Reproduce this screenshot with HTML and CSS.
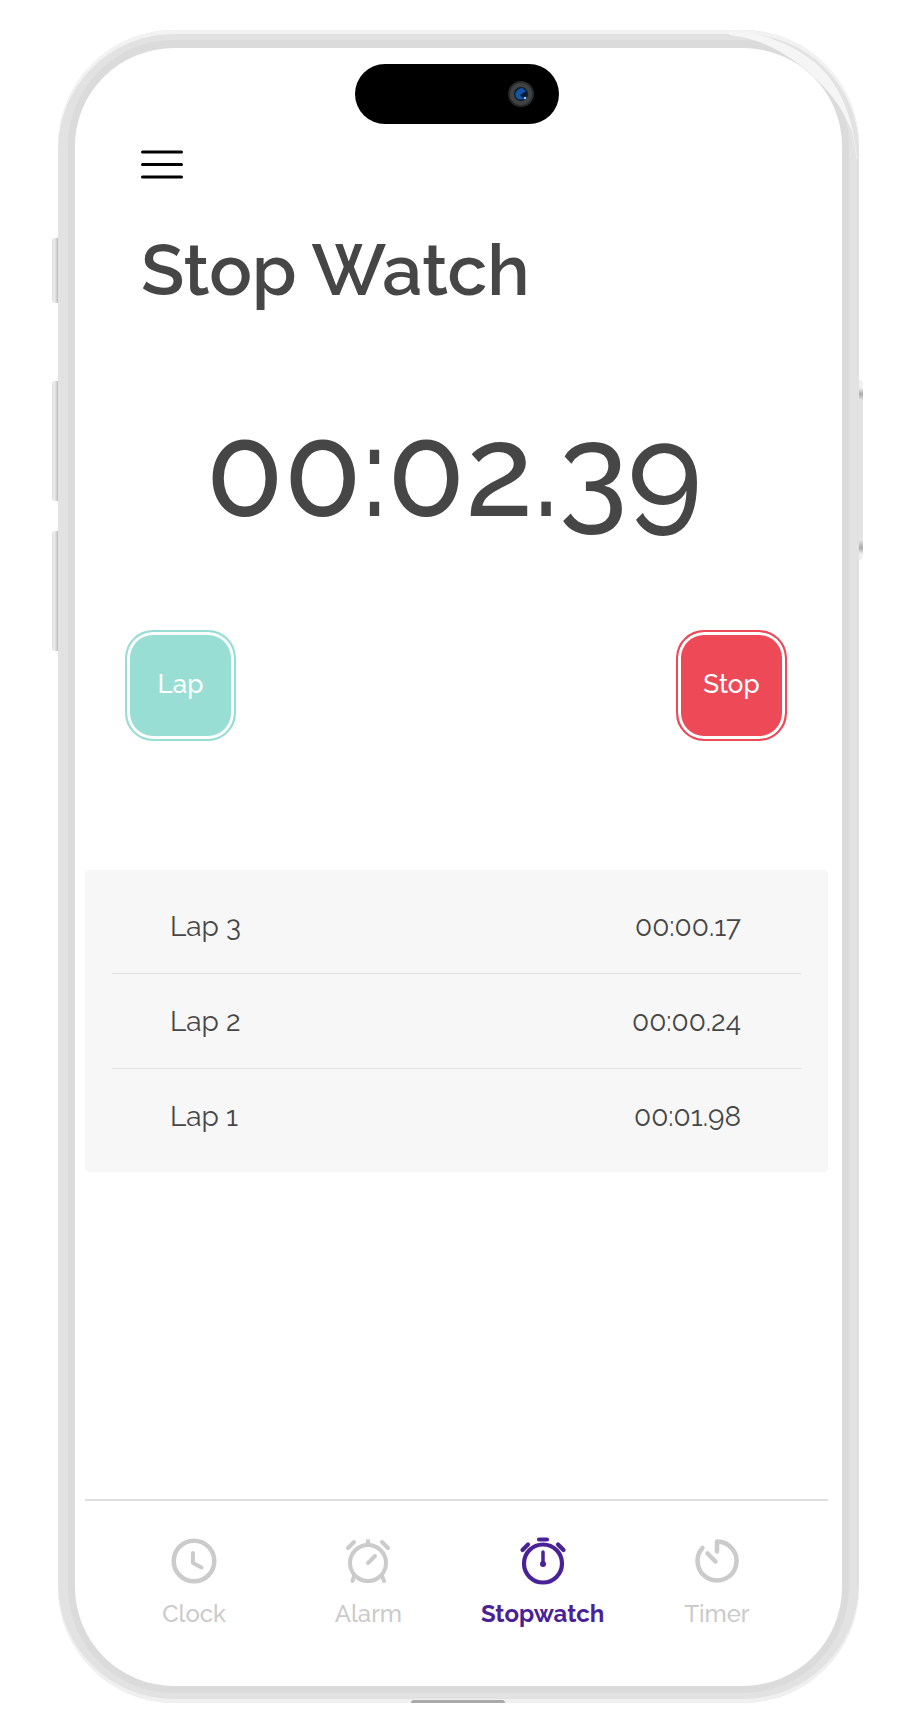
FILE: index.html
```html
<!DOCTYPE html>
<html lang="en">
<head>
    <meta charset="UTF-8">
    <title>Stop Watch</title>
    <meta name="viewport" content="width=device-width, initial-scale=1.0">
    <link rel="stylesheet" href="styles.css">
</head>
<body>
    <div class="phone">
        <span class="side-button action"></span>
        <span class="side-button volume-up"></span>
        <span class="side-button volume-down"></span>
        <span class="side-button power"></span>
        <svg class="shine" width="130" height="130" viewBox="0 0 130 130" fill="none" aria-hidden="true">
            <path d="M0 0C28 0 66 12 92 37C108 53 119 75 125 106C116 82 106 66 88 49C66 28 38 8 0 4Z" fill="#f5f5f5"/>
            <path d="M123 98L128 128" stroke="#efefef"/>
        </svg>
        <span class="port"></span>
        <main class="screen">
            <div class="notch">
                <svg width="26" height="26" viewBox="0 0 26 26" aria-hidden="true">
                    <circle cx="13" cy="13" r="13" fill="#292a2b"/>
                    <circle cx="13" cy="13" r="11" fill="#414243"/>
                    <circle cx="13" cy="13" r="7" fill="#0a1c35"/>
                    <path d="M14 7C9 8 6 12 8 16C10 19 14 19 16 18L12 14L18 10Z" fill="#1455a8"/>
                    <circle cx="17" cy="17" r="1.3" fill="#a9c4e8"/>
                </svg>
            </div>
            <header>
                <button class="menu" type="button" aria-label="Menu">
                    <svg width="42" height="30" viewBox="0 0 42 30" aria-hidden="true">
                        <path d="M1.5 2H40.5M1.5 14.500H40.5M1.5 27H40.5" stroke="#000" stroke-width="3" stroke-linecap="round"/>
                    </svg>
                </button>
                <h1>Stop Watch</h1>
            </header>
            <div class="time" role="timer">00:02.39</div>
            <div class="controls">
                <button class="control lap" type="button">Lap</button>
                <button class="control stop" type="button">Stop</button>
            </div>
            <ol class="laps">
                <li><span>Lap 3</span><span>00:00.17</span></li>
                <li><span>Lap 2</span><span>00:00.24</span></li>
                <li><span>Lap 1</span><span>00:01.98</span></li>
            </ol>
            <nav>
                <a href="#clock">
                    <svg width="50" height="50" viewBox="0 0 50 50" fill="none" stroke="currentColor" stroke-linecap="round" stroke-linejoin="round" aria-hidden="true">
                        <circle cx="25" cy="25" r="20.3" stroke-width="4.500"/>
                        <path d="M24 17V27L32.500 31.500" stroke-width="4"/>
                    </svg>
                    Clock
                </a>
                <a href="#alarm">
                    <svg width="50" height="50" viewBox="0 0 50 50" fill="none" stroke="currentColor" stroke-linecap="round" aria-hidden="true">
                        <circle cx="25" cy="27" r="18" stroke-width="4"/>
                        <path d="M25 5V9M25 27L32 20M11 40L9.500 45M39 40L41 45" stroke-width="4"/>
                        <path d="M5 12L11 6M39 6L45 12" stroke-width="4"/>
                    </svg>
                    Alarm
                </a>
                <a href="#stopwatch" class="active" aria-current="page">
                    <svg width="50" height="50" viewBox="0 0 50 50" fill="none" stroke="currentColor" stroke-linecap="round" aria-hidden="true">
                        <circle cx="25" cy="27.500" r="19" stroke-width="4.200"/>
                        <path d="M21 3.500H29M4.500 14L10 8.500M40 8.500L45.500 14" stroke-width="4.200"/>
                        <path d="M25 16V27" stroke-width="3.500"/>
                        <circle cx="25" cy="28" r="3" fill="currentColor" stroke="none"/>
                    </svg>
                    Stopwatch
                </a>
                <a href="#timer">
                    <svg width="50" height="50" viewBox="0 0 50 50" fill="none" stroke="currentColor" stroke-linecap="round" stroke-linejoin="round" aria-hidden="true">
                        <path d="M25 15.500V5.500A19.500 19.500 0 1 1 10.500 12" stroke-width="4.500"/>
                        <path d="M15.500 17.500L23.500 25.500" stroke-width="4.500"/>
                    </svg>
                    Timer
                </a>
            </nav>
        </main>
    </div>
</body>
</html>
```

FILE: styles.css
```css
* {
    box-sizing: border-box;
    margin: 0;
    padding: 0;
}
body {
    display: flow-root;
    background: #fff;
    color: #464646;
    font-family: Raleway, Lato, sans-serif;
    font-weight: 500;
}
button {
    border: none;
    background: none;
    font: inherit;
    cursor: pointer;
}
.phone {
    position: relative;
    display: flex;
    min-height: calc(100vh - 61px);
    margin: 30px 56px 31px 58px;
    padding: 10px;
    border-radius: 116px;
    background: #e2e2e2;
    box-shadow: inset 0 4px 0 #f2f2f2, inset 0 -4px 0 #f0f0f0;
}
.screen {
    flex: 1;
    display: flex;
    flex-direction: column;
    padding: 0 14px 0 10px;
    border: 7px solid #dbdbdb;
    border-top-width: 8px;
    border-radius: 106px;
    background: #fff;
}

/* phone hardware */
.side-button {
    position: absolute;
    left: -6px;
    width: 6px;
    border-radius: 3px 0 0 3px;
    background: linear-gradient(90deg, #ddd, #eee 40%, #bbb);
}
.action {
    top: 208px;
    height: 65px;
}
.volume-up {
    top: 351px;
    height: 120px;
}
.volume-down {
    top: 501px;
    height: 120px;
}
.power {
    top: 350px;
    left: auto;
    right: -4px;
    width: 4px;
    height: 180px;
    border-radius: 0 3px 3px 0;
    background: linear-gradient(#f0f0f0 8px, #aaa 14px, #e3e3e3 20px, #e3e3e3 160px, #aaa 168px, #f0f0f0 174px);
}
.shine {
    position: absolute;
    top: 1px;
    right: 0;
}
.port {
    position: absolute;
    bottom: 0;
    left: 353px;
    width: 94px;
    height: 3px;
    border-radius: 6px 6px 0 0;
    background: #a9a9a9;
}
.notch {
    display: flex;
    align-items: center;
    justify-content: flex-end;
    width: 204px;
    height: 60px;
    margin: 16px auto 0;
    padding-right: 25px;
    border-radius: 30px;
    background: #000;
}

header {
    padding: 26px 56px 0;
}
.menu, .menu svg {
    display: block;
}
h1 {
    margin-top: 50px;
    font-size: 71px;
    font-weight: 600;
    line-height: 80px;
}
.time {
    margin-top: 98px;
    padding-right: 5px;
    font-size: 127px;
    line-height: 128px;
    text-align: center;
}
.controls {
    display: flex;
    justify-content: space-between;
    margin-top: 94px;
    padding: 0 41px 0 40px;
}
.control {
    width: 111px;
    height: 111px;
    padding: 0 0 4px;
    border: 2px solid;
    border-radius: 28px;
    box-shadow: inset 0 0 0 3px #fff;
    font-size: 26px;
}
.lap {
    border-color: #98ded4;
    background: #98ded4;
    color: #fff;
}
.stop {
    border-color: #ee4957;
    background: #ee4957;
    color: #fff;
}

.laps {
    margin-top: 129px;
    padding: 9px 27px;
    border-radius: 4px;
    background: #f7f7f7;
    list-style: none;
    font-size: 28px;
    font-weight: 400;
}
.laps li {
    display: flex;
    justify-content: space-between;
    padding: 30px 60px 28px 58px;
    line-height: 36px;
}
.laps li + li {
    border-top: 1px solid #e2e2e2;
}

nav {
    display: flex;
    margin-top: auto;
    padding: 35px 24px 56px 22px;
    border-top: 2px solid #e0e0e0;
}
nav a {
    flex: 1;
    display: flex;
    flex-direction: column;
    align-items: center;
    gap: 12px;
    color: #cbcbcb;
    font-size: 24px;
    line-height: 32px;
    text-decoration: none;
}
nav .active {
    color: #4a2297;
    font-weight: 700;
}
```
